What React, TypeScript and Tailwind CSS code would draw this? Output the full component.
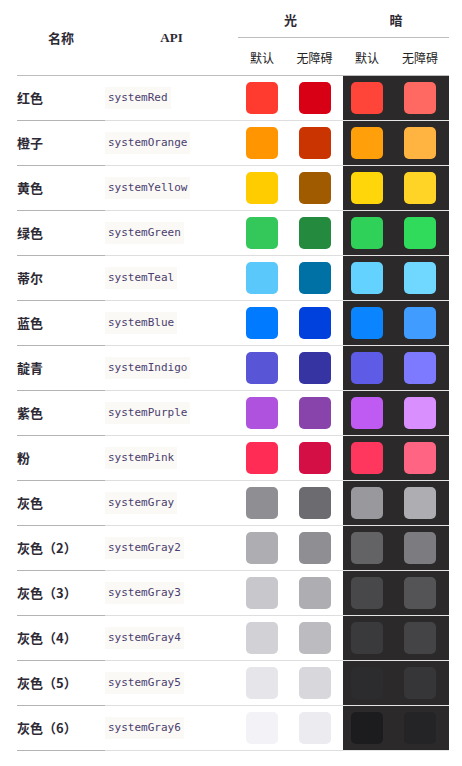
const rows = [
  { name: "红色", api: "systemRed", c: ["#FF3B30", "#D70015", "#FF453A", "#FF6961"] },
  { name: "橙子", api: "systemOrange", c: ["#FF9500", "#C93400", "#FF9F0A", "#FFB340"] },
  { name: "黄色", api: "systemYellow", c: ["#FFCC00", "#A05A00", "#FFD60A", "#FFD426"] },
  { name: "绿色", api: "systemGreen", c: ["#34C759", "#248A3D", "#30D158", "#30DB5B"] },
  { name: "蒂尔", api: "systemTeal", c: ["#5AC8FA", "#0071A4", "#64D2FF", "#70D7FF"] },
  { name: "蓝色", api: "systemBlue", c: ["#007AFF", "#0040DD", "#0A84FF", "#409CFF"] },
  { name: "靛青", api: "systemIndigo", c: ["#5856D6", "#3634A3", "#5E5CE6", "#7D7AFF"] },
  { name: "紫色", api: "systemPurple", c: ["#AF52DE", "#8944AB", "#BF5AF2", "#DA8FFF"] },
  { name: "粉", api: "systemPink", c: ["#FF2D55", "#D30F45", "#FF375F", "#FF6482"] },
  { name: "灰色", api: "systemGray", c: ["#8E8E93", "#6C6C70", "#98989D", "#AEAEB2"] },
  { name: "灰色（2）", api: "systemGray2", c: ["#AEAEB2", "#8E8E93", "#636366", "#7C7C80"] },
  { name: "灰色（3）", api: "systemGray3", c: ["#C7C7CC", "#AEAEB2", "#48484A", "#545456"] },
  { name: "灰色（4）", api: "systemGray4", c: ["#D1D1D6", "#BCBCC0", "#3A3A3C", "#444446"] },
  { name: "灰色（5）", api: "systemGray5", c: ["#E5E5EA", "#D8D8DC", "#2C2C2E", "#363638"] },
  { name: "灰色（6）", api: "systemGray6", c: ["#F2F2F7", "#EBEBF0", "#1C1C1E", "#242426"] },
];

const cjk = "font-['Noto_Sans_CJK_SC',sans-serif]";
const widths = ["w-[53px]", "w-[52px]", "w-[53px]", "w-[53px]"];

function Swatch({ color }: { color: string }) {
  return <div className="w-[32px] h-[32px] rounded-[5px]" style={{ backgroundColor: color }} />;
}

export default function App() {
  return (
    <div className="w-[462px] h-[766px] bg-white text-[#2e2a35]">
      <div className="ml-[17px] w-[432px]">
        {/* header */}
        <div className="flex border-b border-[#bdbdbd]">
          <div className={`w-[88px] h-[75px] flex items-center justify-center text-[13px] font-bold ${cjk}`}>
            名称
          </div>
          <div className="w-[133px] h-[75px] flex items-center justify-center text-[13px] font-bold font-['Liberation_Serif',serif]">
            API
          </div>
          <div className="w-[211px]">
            <div className={`flex h-[38px] border-b border-[#bdbdbd] text-[13px] font-bold ${cjk}`}>
              <div className="w-[105px] flex items-center justify-center pt-[2px]">光</div>
              <div className="w-[106px] flex items-center justify-center pt-[2px]">暗</div>
            </div>
            <div className={`flex h-[37px] text-[12px] text-[#222] ${cjk}`}>
              {["默认", "无障碍", "默认", "无障碍"].map((t, i) => (
                <div key={i} className={`${widths[i]} flex items-center justify-center pr-[5px] pt-[3px]`}>
                  {t}
                </div>
              ))}
            </div>
          </div>
        </div>

        {/* rows */}
        {rows.map((r) => (
          <div key={r.api} className="flex h-[45px]">
            <div className={`w-[88px] flex items-center border-b border-[#b4b4b4] text-[13px] font-bold ${cjk}`}>
              {r.name}
            </div>
            <div className="w-[133px] flex items-center border-b border-[#dedede]">
              <code className="bg-[#faf9f5] px-[3px] py-[3px] text-[11px] leading-[16px] text-[#4a3d70] font-['DejaVu_Sans_Mono',monospace]">
                {r.api}
              </code>
            </div>
            {r.c.map((col, i) => (
              <div
                key={i}
                className={`${widths[i]} flex items-center pl-[8px] border-b ${
                  i >= 2 ? "bg-[#2b2929] border-[#e4e4e4]" : "border-[#dedede]"
                }`}
              >
                <Swatch color={col} />
              </div>
            ))}
          </div>
        ))}
      </div>
    </div>
  );
}
